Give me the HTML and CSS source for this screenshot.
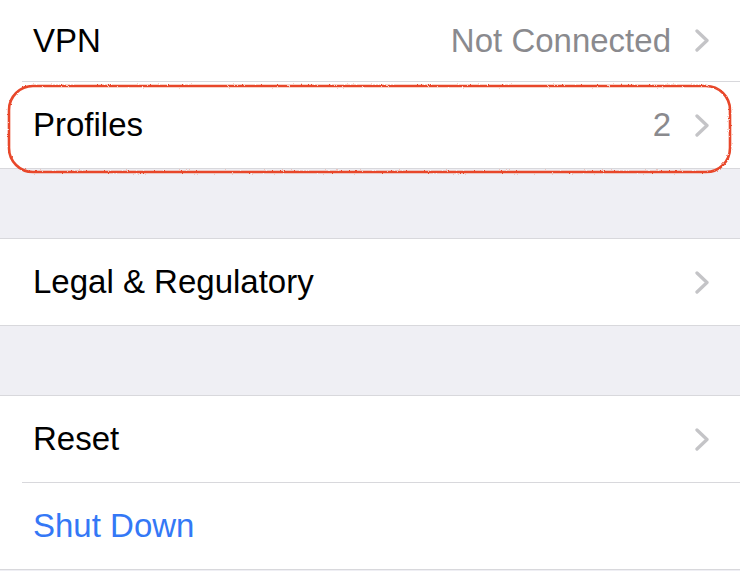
FILE: index.html
```html
<!DOCTYPE html>
<html>
<head>
<meta charset="utf-8">
<link rel="stylesheet" href="styles.css">
</head>
<body>
<div class="page">
  <div class="group first">
    <div class="row vpn">
      <span class="label">VPN</span>
      <span class="value">Not Connected</span>
      <svg class="chev" viewBox="0 0 14 23" width="14" height="23"><polyline points="2,2 12,11.5 2,21" /></svg>
    </div>
    <div class="row">
      <span class="label">Profiles</span>
      <span class="value">2</span>
      <svg class="chev" viewBox="0 0 14 23" width="14" height="23"><polyline points="2,2 12,11.5 2,21" /></svg>
    </div>
  </div>
  <div class="gap"></div>
  <div class="group">
    <div class="row">
      <span class="label">Legal &amp; Regulatory</span>
      <svg class="chev" viewBox="0 0 14 23" width="14" height="23"><polyline points="2,2 12,11.5 2,21" /></svg>
    </div>
  </div>
  <div class="gap"></div>
  <div class="group">
    <div class="row">
      <span class="label">Reset</span>
      <svg class="chev" viewBox="0 0 14 23" width="14" height="23"><polyline points="2,2 12,11.5 2,21" /></svg>
    </div>
    <div class="row">
      <span class="label blue">Shut Down</span>
    </div>
  </div>
  <svg class="annot" width="728" height="94" viewBox="0 0 728 94">
    <defs>
      <filter id="rough" x="-2%" y="-10%" width="104%" height="120%">
        <feTurbulence type="fractalNoise" baseFrequency="0.8" numOctaves="2" seed="3" result="n" />
        <feDisplacementMap in="SourceGraphic" in2="n" scale="2.2" xChannelSelector="R" yChannelSelector="G" />
      </filter>
    </defs>
    <rect x="3" y="3" width="721" height="86" rx="24" ry="24" filter="url(#rough)" />
  </svg>
</div>
</body>
</html>
```

FILE: styles.css
```css
html, body {
  margin: 0;
  padding: 0;
  background: #efeff4;
}
.page {
  position: relative;
  width: 740px;
  height: 571px;
  overflow: hidden;
  font-family: "Liberation Sans", Arial, sans-serif;
}
.group {
  background: #ffffff;
  border-top: 1px solid #d8d8dc;
  border-bottom: 1px solid #d8d8dc;
}
.group.first {
  border-top: none;
}
.row {
  position: relative;
  height: 86px;
  display: flex;
  align-items: center;
  padding-left: 33px;
  padding-right: 31px;
}
.row + .row::before {
  content: "";
  position: absolute;
  top: -1px;
  left: 22px;
  right: 0;
  height: 1px;
  background: #d8d8dc;
}
.row + .row {
  margin-top: 1px;
}
.row.vpn {
  height: 81px;
}
.label {
  flex: 1;
  font-size: 33px;
  color: #000;
  line-height: 1;
  margin-top: -1px;
}
.label.blue {
  color: #3478f6;
}
.value {
  font-size: 33px;
  color: #8a8a8e;
  line-height: 1;
  margin-right: 24px;
  margin-top: -1px;
}
.chev {
  display: block;
  flex: none;
}
.chev polyline {
  fill: none;
  stroke: #c4c4c7;
  stroke-width: 3.3;
  stroke-linecap: round;
  stroke-linejoin: round;
}
.gap {
  height: 69px;
}
.annot {
  position: absolute;
  left: 6px;
  top: 83px;
}
.annot rect {
  fill: none;
  stroke: #e8472b;
  stroke-width: 2.6;
}
```
